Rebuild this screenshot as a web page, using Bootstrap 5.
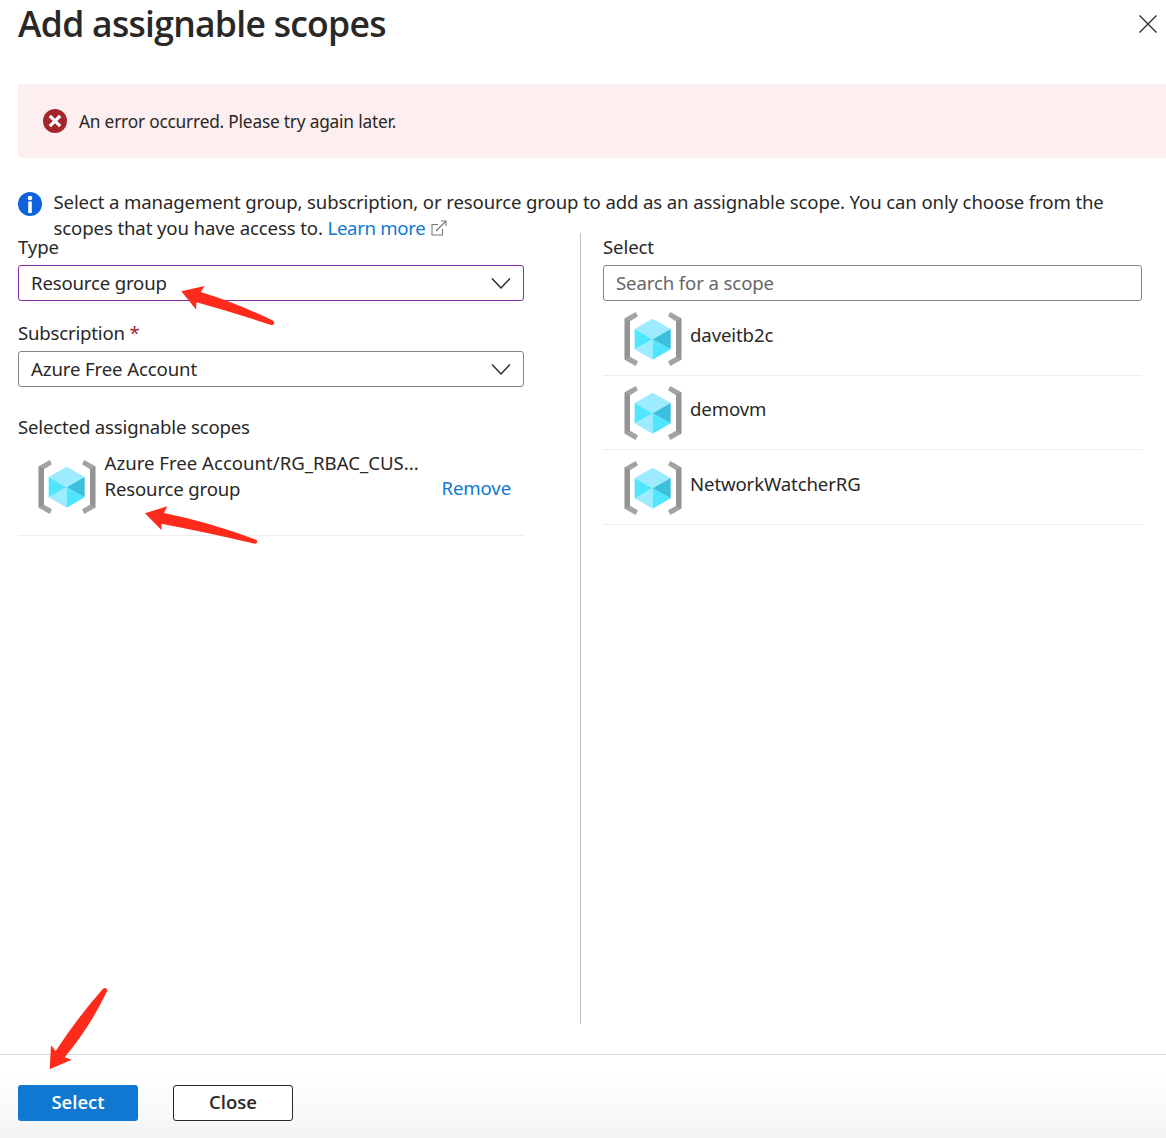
<!DOCTYPE html>
<html lang="en">
<head>
<meta charset="utf-8">
<meta name="viewport" content="width=device-width, initial-scale=1">
<title>Add assignable scopes</title>
<link href="https://cdn.jsdelivr.net/npm/bootstrap@5.3.0/dist/css/bootstrap.min.css" rel="stylesheet">
<style>
body{font-family:"Noto Sans","Open Sans",sans-serif;font-size:18.6px;line-height:26px;letter-spacing:-.12px;color:#292827;background:#fff}
.blade{height:1138px;width:1166px}
.blade-head{height:84px;padding-left:18px;padding-right:9px}
.blade-title{font-family:"Open Sans",sans-serif;font-weight:600;font-size:35.5px;line-height:46px;letter-spacing:-.72px}
.close-x{margin-top:15px;width:18px;height:18px}
.err-bar{height:74px;margin-left:18px;padding-left:25px;background:#fdeeef;border-radius:3px 0 0 3px;font-size:17.3px;letter-spacing:-.2px}
.err-bar span{padding-top:2px}
.info-row{height:43px;margin-top:31px;padding-left:18px}
.info-row>div{width:1090px;padding-left:11.5px}
.info-icon{margin-top:3px}
.ext-icon{margin:-5px 0 0 1px}
.t-i1{letter-spacing:-.13px}
.t-i2{letter-spacing:-.12px}
.t-lm{letter-spacing:-.33px}
.t-rg,.t-sel{letter-spacing:-.17px}
.t-sub{letter-spacing:-.2px}
.t-long{letter-spacing:0}
.link-blue{color:#0f78d4;text-decoration:none}
.left-col{width:506px;margin-left:18px;padding-top:2px}
.rule{width:1px;margin-left:56px;background:#bdbdbd;height:791px}
.right-col{width:539px;margin-left:22px;padding-top:2px}
.cols{padding-top:1px}
.lbl{height:29px;margin-bottom:1px;margin-top:-1px;padding-bottom:1px}
.lbl-sub{margin-top:19px}
.lbl-chosen{margin-top:27px;height:27px}
.req{color:#a4262c}
.pick{height:36px;border:1px solid #858483;border-radius:3px;padding:0 12px;background:#fff}
.lbl+.pick{margin-top:2px}
.pick.active-pick{border-color:#8a2da5}
input.pick{outline:0;width:539px;padding-bottom:2px;color:#292827;letter-spacing:-.12px}
input.pick::placeholder{color:#666;opacity:1}
.pick-row{height:74.5px;border-bottom:1px solid #eee;padding-left:21px}
.pick-row svg{margin-top:10.9px}
.pick-row span{margin-top:20.9px}
.chosen{height:94px;border-bottom:1px solid #eee;padding-left:20px}
.chosen svg{margin-top:18px}
.chosen div{padding-left:.6px}
.t-rem{margin-top:33px;margin-right:13px}
.foot{height:84px;gap:35px;border-top:1px solid #d8d8d8;padding:30px 0 0 18px;background:linear-gradient(#fff 25%,#f4f4f4)}
.foot .btn{width:120px;height:36px;border-radius:3px;padding:0 0 2px;font-family:"Open Sans",sans-serif;font-weight:600;font-size:18.5px;line-height:30px;letter-spacing:0}
.btn-go{background:#1178d1;color:#fff}
.btn-out{background:#fff;border:1px solid #292827;color:#292827}
.marks{left:0;top:0;pointer-events:none}
</style>
<script src="https://cdn.jsdelivr.net/npm/bootstrap@5.3.0/dist/js/bootstrap.bundle.min.js"></script>
</head>
<body>
<svg width="0" height="0" class="position-absolute"><defs>
<symbol id="rg" viewBox="117 45 170 162">
<g id="br"><path fill="#a3a3a3" d="M117 64L150 45L157 58L133 73V179L157 193L150 207L117 188Z"/><path fill="#949494" d="M117 64L133 73V179L117 188Z"/></g>
<use href="#br" transform="translate(404 0) scale(-1 1)"/>
<path fill="#9cebff" d="M147 96L201 65L255 96L201 127ZM147 157L201 127V188Z"/>
<path fill="#50e6ff" d="M147 96L201 127L147 157ZM201 127L255 157L201 188Z"/>
<path fill="#3bbfdd" d="M255 96V157L201 127Z"/>
</symbol></defs></svg>
<main class="blade position-relative overflow-hidden d-flex flex-column">
<header class="blade-head d-flex justify-content-between align-items-start">
<h1 class="blade-title m-0">Add assignable scopes</h1>
<svg class="close-x" viewBox="0 0 18 18" stroke="#292827" stroke-width="1.3"><path d="M.5 .5L17.5 17.5M17.5 .5L.5 17.5"/></svg>
</header>
<div class="err-bar d-flex align-items-center">
<svg width="24" height="24" viewBox="0 0 24 24"><circle cx="12" cy="12" r="12" fill="#a4262c"/><path d="M6.8 6.8L17.2 17.2M17.2 6.8L6.8 17.2" stroke="#fff" stroke-width="3.2"/></svg>
<span class="ms-2 ps-1">An error occurred. Please try again later.</span>
</div>
<div class="info-row d-flex align-items-start">
<svg class="info-icon flex-shrink-0" width="24" height="24" viewBox="0 0 24 24"><circle cx="12" cy="12" r="12" fill="#0f62dc"/><circle cx="12" cy="6" r="2.3" fill="#fff"/><path d="M10.2 9.5h3.6V21h-3.6z" fill="#fff"/></svg>
<div class="text-nowrap"><span class="t-i1">Select a management group, subscription, or resource group to add as an assignable scope. You can only choose from the</span><br><span class="t-i2">scopes that you have access to.</span> <a class="link-blue t-lm" href="#">Learn more</a>
<svg class="ext-icon" width="16" height="16" viewBox="0 0 16 16" fill="none" stroke="#777" stroke-width="1.1"><path d="M7 4.5H1V15H11.5V9M5 11L15 1M10 1H15V6"/></svg></div>
</div>
<div class="cols d-flex flex-grow-1 align-items-start">
<section class="left-col">
<div class="lbl"><span>Type</span></div>
<div class="pick active-pick d-flex align-items-center justify-content-between"><span class="t-rg">Resource group</span>
<svg width="20" height="12" viewBox="0 0 20 12" fill="none" stroke="#292827" stroke-width="1.4"><path d="M1 1.5L10 11L19 1.5"/></svg></div>
<div class="lbl lbl-sub"><span class="t-sub">Subscription</span> <span class="req">*</span></div>
<div class="pick d-flex align-items-center justify-content-between"><span>Azure Free Account</span>
<svg width="20" height="12" viewBox="0 0 20 12" fill="none" stroke="#292827" stroke-width="1.4"><path d="M1 1.5L10 11L19 1.5"/></svg></div>
<div class="lbl lbl-chosen"><span class="t-sel">Selected assignable scopes</span></div>
<div class="chosen d-flex">
<svg width="58" height="54"><use href="#rg"/></svg>
<div class="ms-2 mt-2 text-nowrap"><span class="t-long">Azure Free Account/RG_RBAC_CUS...</span><br><span class="t-rg">Resource group</span></div>
<a class="link-blue t-rem ms-auto" href="#">Remove</a>
</div>
</section>
<div class="rule"></div>
<section class="right-col">
<div class="lbl"><span>Select</span></div>
<input class="pick d-block" placeholder="Search for a scope">
<div class="pick-row d-flex"><svg width="58" height="54"><use href="#rg"/></svg><span class="ms-2">daveitb2c</span></div>
<div class="pick-row d-flex"><svg width="58" height="54"><use href="#rg"/></svg><span class="ms-2">demovm</span></div>
<div class="pick-row d-flex"><svg width="58" height="54"><use href="#rg"/></svg><span class="ms-2">NetworkWatcherRG</span></div>
</section>
</div>
<footer class="foot d-flex"><button class="btn btn-go">Select</button><button class="btn btn-out">Close</button></footer>
<svg class="marks position-absolute" width="1166" height="1138" fill="#fe2b1c">
<path d="M181.3 291.3L204.7 286L200.7 292Q238 303.5 272.7 320.6Q274.8 322 274 324Q273 325.6 271 325Q235 313 196.5 302.3L196 309.5Z"/>
<path d="M145 513.3L167.3 506.3L164 513Q211 522.5 256 539.8Q257.6 540.5 257.2 542.3Q256.6 544 254.8 543.7Q210 533 161.3 523.7L161.7 530.3Z"/>
<path d="M49.7 1069.3L51 1045.3L55.7 1051Q78 1017 102.8 989Q104.4 987.4 106.3 988.4Q107.8 989.7 107 991.3Q90 1027 64.7 1057.3L71.7 1059.7Z"/>
</svg>
</main>
</body>
</html>
